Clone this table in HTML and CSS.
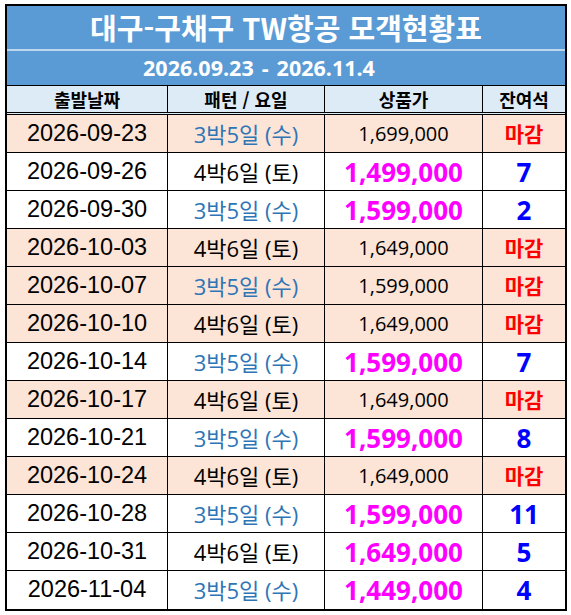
FILE: index.html
```html
<!DOCTYPE html>
<html lang="ko">
<head>
<meta charset="utf-8">
<title>대구-구채구 TW항공 모객현황표</title>
<link rel="stylesheet" href="styles.css">
</head>
<body>
<div class="sheet">
  <div class="title">대구-구채구 TW항공 모객현황표</div>
  <div class="subtitle">2026.09.23<span class="sep">-</span>2026.11.4</div>
  <div class="row head">
    <div class="cell">출발날짜</div>
    <div class="cell">패턴 / 요일</div>
    <div class="cell">상품가</div>
    <div class="cell">잔여석</div>
  </div>
  <div class="row peach">
    <div class="cell date">2026-09-23</div>
    <div class="cell pat blue">3박5일 (수)</div>
    <div class="cell price">1,699,000</div>
    <div class="cell seat closed">마감</div>
  </div>
  <div class="row">
    <div class="cell date">2026-09-26</div>
    <div class="cell pat">4박6일 (토)</div>
    <div class="cell price hot">1,499,000</div>
    <div class="cell seat num">7</div>
  </div>
  <div class="row">
    <div class="cell date">2026-09-30</div>
    <div class="cell pat blue">3박5일 (수)</div>
    <div class="cell price hot">1,599,000</div>
    <div class="cell seat num">2</div>
  </div>
  <div class="row peach">
    <div class="cell date">2026-10-03</div>
    <div class="cell pat">4박6일 (토)</div>
    <div class="cell price">1,649,000</div>
    <div class="cell seat closed">마감</div>
  </div>
  <div class="row peach">
    <div class="cell date">2026-10-07</div>
    <div class="cell pat blue">3박5일 (수)</div>
    <div class="cell price">1,599,000</div>
    <div class="cell seat closed">마감</div>
  </div>
  <div class="row peach">
    <div class="cell date">2026-10-10</div>
    <div class="cell pat">4박6일 (토)</div>
    <div class="cell price">1,649,000</div>
    <div class="cell seat closed">마감</div>
  </div>
  <div class="row">
    <div class="cell date">2026-10-14</div>
    <div class="cell pat blue">3박5일 (수)</div>
    <div class="cell price hot">1,599,000</div>
    <div class="cell seat num">7</div>
  </div>
  <div class="row peach">
    <div class="cell date">2026-10-17</div>
    <div class="cell pat">4박6일 (토)</div>
    <div class="cell price">1,649,000</div>
    <div class="cell seat closed">마감</div>
  </div>
  <div class="row">
    <div class="cell date">2026-10-21</div>
    <div class="cell pat blue">3박5일 (수)</div>
    <div class="cell price hot">1,599,000</div>
    <div class="cell seat num">8</div>
  </div>
  <div class="row peach">
    <div class="cell date">2026-10-24</div>
    <div class="cell pat">4박6일 (토)</div>
    <div class="cell price">1,649,000</div>
    <div class="cell seat closed">마감</div>
  </div>
  <div class="row">
    <div class="cell date">2026-10-28</div>
    <div class="cell pat blue">3박5일 (수)</div>
    <div class="cell price hot">1,599,000</div>
    <div class="cell seat num">11</div>
  </div>
  <div class="row">
    <div class="cell date">2026-10-31</div>
    <div class="cell pat">4박6일 (토)</div>
    <div class="cell price hot">1,649,000</div>
    <div class="cell seat num">5</div>
  </div>
  <div class="row">
    <div class="cell date">2026-11-04</div>
    <div class="cell pat blue">3박5일 (수)</div>
    <div class="cell price hot">1,449,000</div>
    <div class="cell seat num">4</div>
  </div>
</div>
</body>
</html>
```
FILE: styles.css
```css
html, body {
  margin: 0;
  padding: 0;
  background: #ffffff;
}

body {
  font-family: "Open Sans", "Noto Sans CJK KR", sans-serif;
  color: #000;
}

.sheet {
  margin: 4px 0 0 5px;
  width: 562px;
  border: 2px solid #000;
  box-sizing: border-box;
  background: #fff;
}

.title {
  height: 45px;
  box-sizing: border-box;
  background: #5b9bd5;
  border-bottom: 2px solid #bdd7ee;
  color: #fff;
  font-family: "Noto Sans CJK KR", sans-serif;
  font-weight: 700;
  font-size: 29px;
  line-height: 1;
  display: flex;
  align-items: center;
  justify-content: center;
}

.subtitle {
  height: 35px;
  box-sizing: border-box;
  padding-right: 54px;
  background: #5b9bd5;
  border-bottom: 1px solid #000;
  color: #fff;
  font-weight: 700;
  font-size: 21.5px;
  line-height: 1;
  display: flex;
  align-items: center;
  justify-content: center;
}

.sep {
  margin: 0 8px;
}

.row {
  display: grid;
  grid-template-columns: 161px 157px 158px 82px;
  height: 38px;
  box-sizing: border-box;
  border-bottom: 1px solid #000;
}

.row:last-child {
  border-bottom: none;
}

.row.head {
  height: 29px;
  background: #ddebf7;
  border-bottom: 3px double #000;
}

.row.peach {
  background: #fce4d6;
}

.cell {
  border-right: 1px solid #000;
  display: flex;
  align-items: center;
  justify-content: center;
  line-height: 1;
  white-space: nowrap;
}

.cell:last-child {
  border-right: none;
}

.head .cell {
  font-family: "Noto Sans CJK KR", sans-serif;
  font-weight: 700;
  font-size: 18px;
}

.date {
  font-family: "Liberation Sans", Arial, sans-serif;
  font-size: 23.5px;
}

.pat {
  font-size: 22px;
}

.blue {
  color: #2e75b6;
}

.price {
  font-size: 20px;
}

.price.hot {
  color: #ff00ff;
  font-weight: 700;
  font-size: 26px;
}

.seat.closed {
  color: #ff0000;
  font-family: "Noto Sans CJK KR", sans-serif;
  font-weight: 700;
  font-size: 21px;
}

.seat.num {
  color: #0000ff;
  font-weight: 700;
  font-size: 26px;
}
```
